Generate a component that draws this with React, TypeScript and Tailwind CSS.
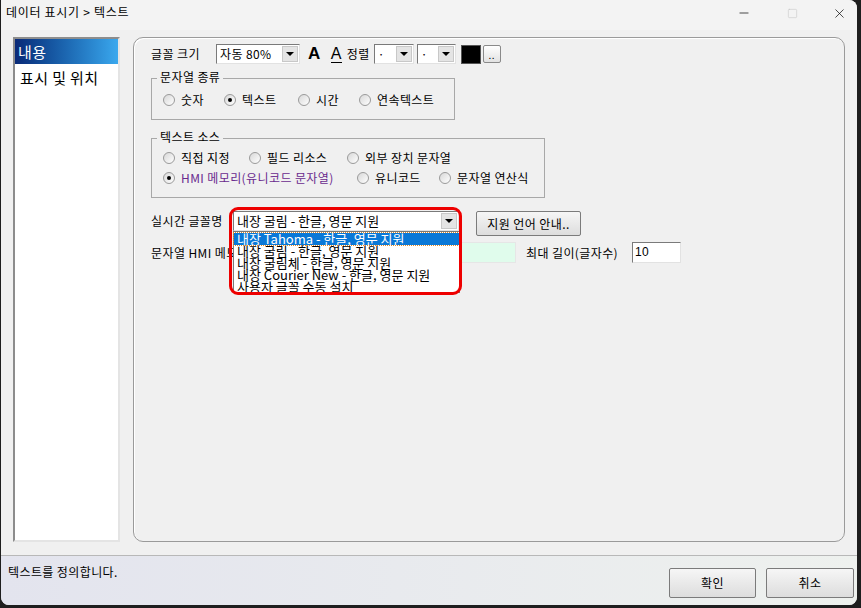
import React from 'react';
import { Minus, Square, X } from 'lucide-react';

const Radio: React.FC<{ label: string; checked?: boolean; w?: string; purple?: boolean }> = ({ label, checked, w, purple }) => (
  <div className={`flex items-center gap-[6px] ${w ?? ''}`}>
    <span className="w-[12px] h-[12px] rounded-full border border-[#9a9a9a] bg-gradient-to-br from-[#d8d8d8] to-white flex items-center justify-center shrink-0">
      {checked && <span className="w-[4px] h-[4px] rounded-full bg-black" />}
    </span>
    <span className={`whitespace-nowrap ${purple ? 'text-[#6a2a8e]' : ''}`}>{label}</span>
  </div>
);

const Arrow: React.FC = () => (
  <span className="w-[16px] h-[16px] bg-[#e4e4e4] border border-[#c8c8c8] flex items-center justify-center shrink-0">
    <span className="w-0 h-0 border-l-[4px] border-r-[4px] border-t-[4px] border-l-transparent border-r-transparent border-t-black" />
  </span>
);

const Select: React.FC<{ text: string; w: string; size?: string }> = ({ text, w, size }) => (
  <div className={`h-[20px] ${w} bg-white border border-t-[#7a7a7a] border-l-[#7a7a7a] border-r-[#e2e2e2] border-b-[#e2e2e2] flex items-center justify-between pl-[3px] pr-[1px]`}>
    <span className={`${size ?? 'text-[12px]'} leading-[14px] whitespace-nowrap`}>{text}</span>
    <Arrow />
  </div>
);

const Group: React.FC<{ title: string; w: string; h: string; mt: string; children: React.ReactNode }> = ({ title, w, h, mt, children }) => (
  <div className={`relative ${w} ${h} ${mt} border border-[#a8a8a8]`}>
    <span className="absolute -top-[10px] left-[5px] px-[3px] bg-[#f0f0f0] leading-[16px]">{title}</span>
    {children}
  </div>
);

const WinButton: React.FC<{ label: string; w: string; h: string }> = ({ label, w, h }) => (
  <button className={`${w} ${h} border border-[#7b7b7b] rounded-[2px] bg-gradient-to-b from-[#f6f6f6] to-[#dddddd] text-[12px] flex items-center justify-center`}>
    {label}
  </button>
);

const fonts = ['내장 Tahoma - 한글, 영문 지원', '내장 굴림 - 한글, 영문 지원', '내장 굴림체 - 한글, 영문 지원', '내장 Courier New - 한글, 영문 지원', '사용자 글꼴 수동 설치'];

export default function App() {
  return (
    <div className="w-[861px] h-[608px] bg-[#1e1e1e] overflow-hidden text-[12px] text-black tracking-[0.4px]" style={{ fontFamily: '"Noto Sans CJK KR", "Noto Sans", sans-serif' }}>
      <div className="ml-[1px] w-[856px] h-[605px] bg-[#f0f0f0] rounded-r-[8px] rounded-bl-[8px] overflow-hidden flex flex-col">
        {/* Title bar */}
        <div className="h-[30px] bg-[#f3f3f3] flex items-center justify-between shrink-0 pr-[10px]">
          <span className="ml-[5px] -mt-[6px] text-[12px] leading-[14px] tracking-[0.7px]">데이터 표시기 &gt; 텍스트</span>
          <div className="flex items-center -mt-[4px]">
            <Minus size={14} strokeWidth={1.2} />
            <Square size={11} strokeWidth={1.2} className="ml-[36px] text-[#c4c4c4]" />
            <X size={15} strokeWidth={1.1} className="ml-[34px]" />
          </div>
        </div>

        {/* Body */}
        <div className="flex-1 flex pl-[12px] pr-[12px] pt-[7px] pb-[13px] gap-[13px]">
          <div className="w-[107px] bg-white border-2 border-t-[#8c8c8c] border-l-[#8c8c8c] border-r-[#e4e4e4] border-b-[#e4e4e4]">
            <div className="h-[25px] bg-gradient-to-r from-[#0a2a78] to-[#3aa8ee] text-white text-[15px] leading-[25px] pl-[3px]">내용</div>
            <div className="h-[27px] text-[15px] leading-[27px] pl-[5px]">표시 및 위치</div>
          </div>

          <div className="flex-1 h-[505px] border border-[#9a9a9a] rounded-[10px] shadow-[inset_1px_1px_0_#ffffff] pl-[17px] pt-[6px]">
            {/* Row 1 */}
            <div className="flex items-center h-[20px]">
              <span className="w-[65px]">글꼴 크기</span>
              <Select text="자동 80%" w="w-[84px]" />
              <span className="ml-[8px] text-[17px] font-bold leading-[20px]" style={{ fontFamily: '"Liberation Sans", sans-serif' }}>A</span>
              <span className="ml-[10px] text-[16px] leading-[16px] border-b border-black font-light" style={{ fontFamily: '"Liberation Sans", sans-serif' }}>A</span>
              <span className="ml-[5px]">정렬</span>
              <Select text="·" w="w-[40px] ml-[4px]" />
              <Select text="·" w="w-[39px] ml-[3px]" />
              <span className="ml-[5px] w-[20px] h-[19px] bg-black border border-[#555]" />
              <span className="ml-[2px] w-[18px] h-[18px] border border-[#8a8a8a] rounded-[2px] bg-gradient-to-b from-white to-[#e2e2e2] text-[10px] leading-[18px] text-center">..</span>
            </div>

            {/* 문자열 종류 */}
            <Group title="문자열 종류" w="w-[304px]" h="h-[42px]" mt="mt-[14px]">
              <div className="flex items-center pl-[11px] pt-[13px] leading-[16px]">
                <Radio label="숫자" w="w-[61px]" />
                <Radio label="텍스트" checked w="w-[74px]" />
                <Radio label="시간" w="w-[61px]" />
                <Radio label="연속텍스트" />
              </div>
            </Group>

            {/* 텍스트 소스 */}
            <Group title="텍스트 소스" w="w-[394px]" h="h-[60px]" mt="mt-[18px]">
              <div className="pl-[11px] pt-[11px] leading-[16px] flex flex-col gap-[4px]">
                <div className="flex items-center">
                  <Radio label="직접 지정" w="w-[86px]" />
                  <Radio label="필드 리소스" w="w-[98px]" />
                  <Radio label="외부 장치 문자열" />
                </div>
                <div className="flex items-center">
                  <Radio label="HMI 메모리(유니코드 문자열)" checked purple w="w-[194px]" />
                  <Radio label="유니코드" w="w-[82px]" />
                  <Radio label="문자열 연산식" />
                </div>
              </div>
            </Group>

            {/* 실시간 글꼴명 */}
            <div className="flex items-start mt-[13px] h-[25px]">
              <span className="w-[82px] leading-[20px]">실시간 글꼴명</span>
              <div className="relative z-10 tracking-normal">
                <Select text="내장 굴림 - 한글, 영문 지원" w="w-[226px]" size="text-[13px]" />
                <div className="absolute left-0 top-[20px] w-[227px] h-[62px] bg-white border border-[#7a7a7a] pt-[1px]">
                  {fonts.map((f, i) => (
                    <div
                      key={f}
                      className={`h-[12px] leading-[12px] text-[13px] pl-[3px] whitespace-nowrap ${i === 0 ? 'bg-[#0a78d7] text-white outline-1 outline-dotted outline-[#e08a2a]' : ''}`}
                    >
                      {f}
                    </div>
                  ))}
                </div>
                <div className="absolute -left-[4px] -top-[4px] w-[233px] h-[88px] border-[3px] border-[#ee0000] rounded-[9px] pointer-events-none" />
              </div>
              <div className="ml-[17px]">
                <WinButton label="지원 언어 안내.." w="w-[105px]" h="h-[25px]" />
              </div>
            </div>

            {/* 문자열 HMI 메모리 */}
            <div className="flex items-center mt-[6px] h-[21px]">
              <span className="w-[138px] whitespace-nowrap overflow-hidden">문자열 HMI 메모리 주소</span>
              <span className="w-[227px] h-[21px] bg-[#e0fcec] border border-[#e6e6e6]" />
              <span className="ml-[10px] w-[106px] whitespace-nowrap">최대 길이(글자수)</span>
              <span className="w-[49px] h-[21px] bg-white border border-t-[#7a7a7a] border-l-[#7a7a7a] border-r-[#e2e2e2] border-b-[#e2e2e2] pl-[2px] leading-[18px]" style={{ fontFamily: '"Liberation Sans", sans-serif' }}>10</span>
            </div>
          </div>
        </div>

        {/* Bottom bar */}
        <div className="h-[50px] shrink-0 border-t border-[#b8b8b8] bg-gradient-to-r from-[#e3e4ee] to-[#eef1ee] flex items-start justify-between pl-[7px] pr-[3px]">
          <span className="mt-[9px] leading-[14px]">텍스트를 정의합니다.</span>
          <div className="flex gap-[10px] mt-[12px]">
            <WinButton label="확인" w="w-[87px]" h="h-[30px]" />
            <WinButton label="취소" w="w-[88px]" h="h-[30px]" />
          </div>
        </div>
      </div>
    </div>
  );
}
